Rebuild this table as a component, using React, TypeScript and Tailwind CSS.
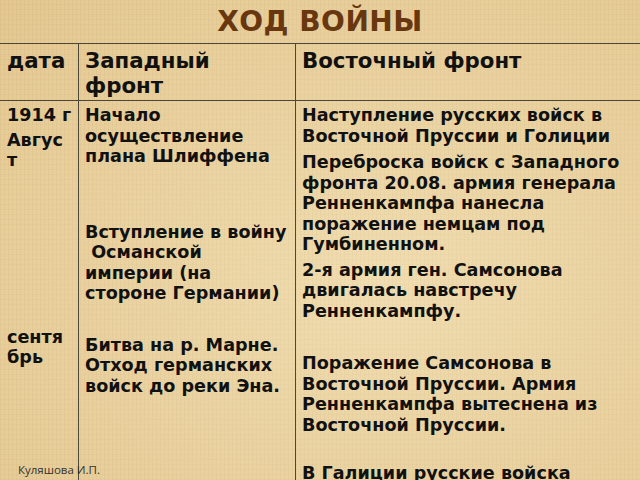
import React from "react";

const font = { fontFamily: '"DejaVu Sans", Verdana, sans-serif' };

export default function App() {
  return (
    <div
      className="relative w-[640px] h-[480px] overflow-hidden text-[#111]"
      style={font}
    >
      <div className="absolute inset-0 bg-[#e8d09c]" />
      <div className="absolute inset-0 bg-[repeating-linear-gradient(90deg,rgba(160,120,60,0.07)_0px,rgba(160,120,60,0.07)_1px,transparent_1px,transparent_4px)]" />
      <div className="absolute inset-0 bg-[repeating-linear-gradient(0deg,rgba(160,120,60,0.05)_0px,rgba(160,120,60,0.05)_1px,transparent_1px,transparent_5px)]" />
      <div className="absolute inset-0 bg-[radial-gradient(ellipse_at_60%_60%,rgba(255,245,215,0.35),rgba(200,150,80,0.15))]" />

      <div className="relative flex flex-col">
        <div className="h-[43px] flex items-center justify-center pt-[1px]">
          <h1 className="text-[28px] font-bold text-[#683710] tracking-[0.5px] leading-none">
            ХОД ВОЙНЫ
          </h1>
        </div>

        <div className="w-[680px] border-t border-[#4e4636]">
          <div className="grid grid-cols-[78px_217px_1fr] h-[57px] border-b border-[#4e4636] font-bold text-[21.3px] leading-[25px]">
            <div className="pl-[7px] pt-[4px]">дата</div>
            <div className="border-l border-[#4e4636] pl-[6px] pt-[4px]">
              Западный
              <br />
              фронт
            </div>
            <div className="border-l border-[#4e4636] pl-[6px] pt-[4px]">
              Восточный фронт
            </div>
          </div>

          <div className="grid grid-cols-[78px_217px_1fr] h-[400px] font-bold text-[17.6px] leading-[20.5px]">
            <div className="pl-[7px] pt-[4px]">
              <p>1914 г</p>
              <p className="mt-[4px]">
                Авгус
                <br />т
              </p>
              <p className="mt-[156px]">
                сентя
                <br />
                брь
              </p>
            </div>
            <div className="border-l border-[#4e4636] pl-[6px] pr-[2px] pt-[4px]">
              <p>
                Начало
                <br />
                осуществление
                <br />
                плана Шлиффена
              </p>
              <p className="mt-[55px]">
                Вступление в войну
                <br />
                &nbsp;Османской
                <br />
                империи (на
                <br />
                стороне Германии)
              </p>
              <p className="mt-[31px]">
                Битва на р. Марне.
                <br />
                Отход германских
                <br />
                войск до реки Эна.
              </p>
            </div>
            <div className="border-l border-[#4e4636] pl-[6px] pt-[4px] w-[345px]">
              <p>
                Наступление русских войск в
                <br />
                Восточной Пруссии и Голиции
              </p>
              <p className="mt-[6px]">
                Переброска войск с Западного
                <br />
                фронта 20.08. армия генерала
                <br />
                Ренненкампфа нанесла
                <br />
                поражение немцам под
                <br />
                Гумбиненном.
              </p>
              <p className="mt-[5px]">
                2-я армия ген. Самсонова
                <br />
                двигалась навстречу
                <br />
                Ренненкампфу.
              </p>
              <p className="mt-[32px]">
                Поражение Самсонова в
                <br />
                Восточной Пруссии. Армия
                <br />
                Ренненкампфа вытеснена из
                <br />
                Восточной Пруссии.
              </p>
              <p className="mt-[28px]">В Галиции русские войска</p>
            </div>
          </div>
        </div>
      </div>

      <div
        className="absolute left-[18px] top-[463px] text-[11.5px] leading-[14px] text-[#333]"
        style={{ fontFamily: '"Open Sans", "Liberation Sans", sans-serif' }}
      >
        Куляшова И.П.
      </div>
    </div>
  );
}
